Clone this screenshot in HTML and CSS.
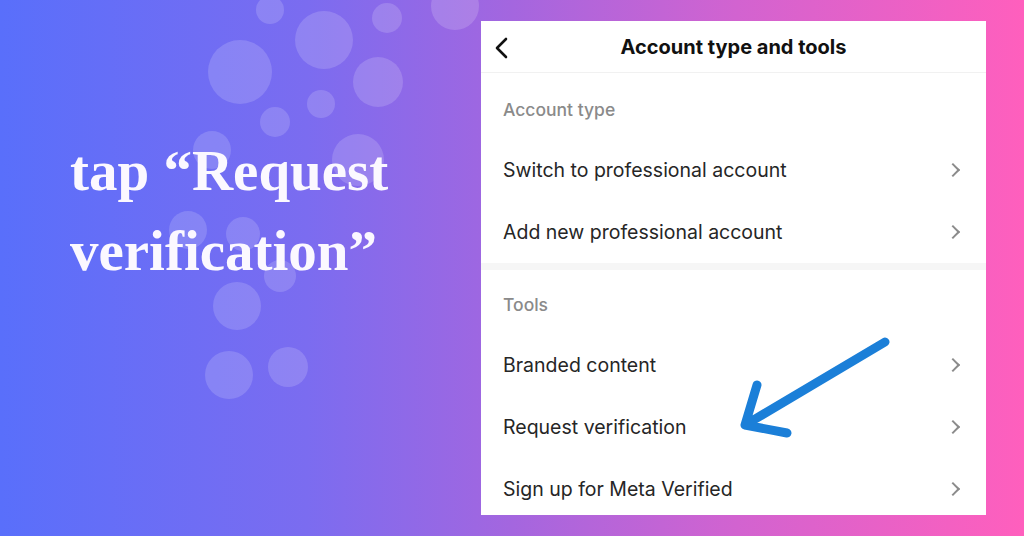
FILE: index.html
```html
<!DOCTYPE html>
<html lang="en">
  <head>
    <meta charset="UTF-8" />
    <meta name="viewport" content="width=device-width, initial-scale=1.0" />
    <title>Request verification</title>
    <link rel="stylesheet" href="styles.css">
  </head>
  <body>
    <main class="slide">
      <svg class="blobs" width="1024" height="536" aria-hidden="true">
        <circle cx="270" cy="10" r="14" />
        <circle cx="324" cy="40" r="29" />
        <circle cx="387" cy="18" r="15" />
        <circle cx="455" cy="6" r="24" />
        <circle cx="240" cy="72" r="32" />
        <circle cx="378" cy="82" r="25" />
        <circle cx="321" cy="104" r="14" />
        <circle cx="275" cy="122" r="15" />
        <circle cx="212" cy="150" r="19" />
        <circle cx="358" cy="160" r="26" />
        <circle cx="188" cy="230" r="19" />
        <circle cx="243" cy="234" r="17" />
        <circle cx="280" cy="276" r="16" />
        <circle cx="237" cy="306" r="24" />
        <circle cx="229" cy="375" r="24" />
        <circle cx="288" cy="367" r="20" />
      </svg>

      <h1 class="headline">tap “Request verification”</h1>

      <section class="phone">
        <header class="phone-bar">
          <svg class="back" width="16" height="22" viewBox="0 0 16 22">
            <path d="M13 2 4 11l9 9" fill="none" stroke="#111" stroke-width="2.6" stroke-linecap="round" stroke-linejoin="round" />
          </svg>
          <h2>Account type and tools</h2>
        </header>

        <div class="group">
          <h3>Account type</h3>
          <a class="row">Switch to professional account</a>
          <a class="row">Add new professional account</a>
        </div>

        <div class="group">
          <h3 class="tight">Tools</h3>
          <a class="row">Branded content</a>
          <a class="row">Request verification</a>
          <a class="row">Sign up for Meta Verified</a>
        </div>

        <svg class="pointer" width="185" height="115" viewBox="0 0 185 115" aria-hidden="true">
          <path d="M170 7 30 90M42 50 30 90l42 8" fill="none" stroke="#1b7fd8" stroke-width="9" stroke-linecap="round" stroke-linejoin="round" />
        </svg>
      </section>
    </main>
  </body>
</html>
```

FILE: styles.css
```css
body {
  margin: 0;
  padding: 0;
}
.slide {
  position: relative;
  display: flex;
  width: 1024px;
  height: 536px;
  overflow: hidden;
  background: linear-gradient(90deg, #596ffb 0%, #7b6cf0 30%, #a466df 50%, #d263d0 72%, #ff5fbd 100%);
}
.blobs {
  position: absolute;
  top: 0;
  left: 0;
  fill: rgba(255, 255, 255, 0.16);
}
.headline {
  position: relative;
  box-sizing: border-box;
  width: 481px;
  margin: 0;
  padding: 131px 0 0 70px;
  font-family: "Liberation Serif", "Times New Roman", serif;
  font-size: 57px;
  font-weight: 700;
  line-height: 80px;
  color: #fbf8ff;
}
.phone {
  position: relative;
  width: 505px;
  height: 494px;
  margin-top: 21px;
  overflow: hidden;
  background: #fff;
  font-family: Inter, "Noto Sans", sans-serif;
  color: #262626;
}
.phone-bar {
  display: flex;
  align-items: center;
  justify-content: center;
  height: 51px;
  border-bottom: 1px solid #f1f1f1;
}
.phone-bar .back {
  position: absolute;
  left: 12px;
  top: 16px;
}
.phone-bar h2 {
  margin: 0;
  font-size: 20px;
  font-weight: 700;
  color: #111;
}
.group + .group {
  border-top: 7px solid #f6f6f6;
}
.group h3 {
  margin: 0;
  padding: 26px 22px 18px;
  font-size: 17.5px;
  font-weight: 500;
  line-height: 22px;
  color: #8a8a8a;
}
.group h3.tight {
  padding-top: 24px;
}
.row {
  display: flex;
  align-items: center;
  justify-content: space-between;
  height: 62px;
  padding: 0 28px 0 22px;
  font-size: 19.5px;
}
.row::after {
  content: "";
  width: 8px;
  height: 8px;
  border-top: 2px solid #8b8b8b;
  border-right: 2px solid #8b8b8b;
  transform: rotate(45deg);
}
.pointer {
  position: absolute;
  left: 234px;
  top: 314px;
}
```
